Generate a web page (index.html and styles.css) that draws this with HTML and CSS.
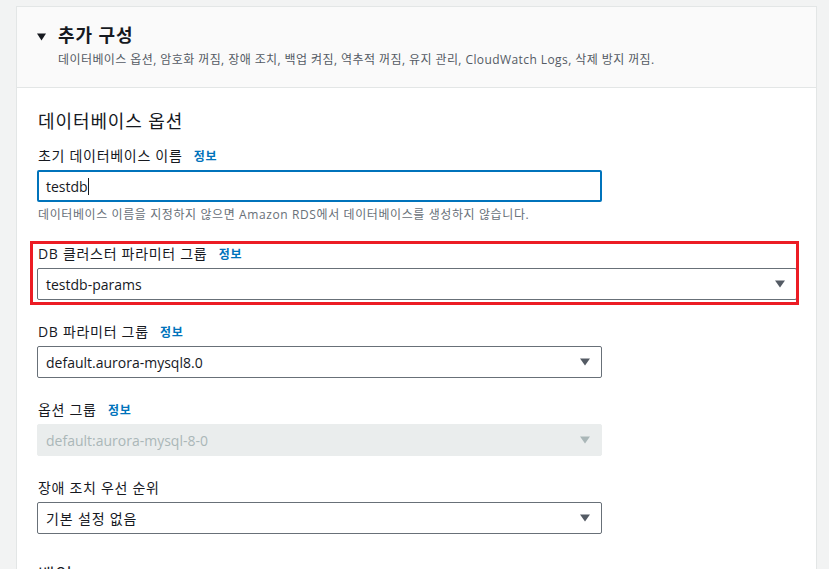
FILE: index.html
```html
<!DOCTYPE html>
<html lang="ko">
<head>
<meta charset="utf-8">
<title>추가 구성</title>
<link rel="stylesheet" href="styles.css">
</head>
<body>
<div class="page">
  <section class="panel">
    <header class="panel-header">
      <svg class="caret" width="9" height="8" viewBox="0 0 9 8"><polygon points="0,0.5 9,0.5 4.5,7.5" fill="#16191f"/></svg>
      <div class="header-text">
        <h2 class="title">추가 구성</h2>
        <p class="subtitle">데이터베이스 옵션, 암호화 꺼짐, 장애 조치, 백업 켜짐, 역추적 꺼짐, 유지 관리, CloudWatch Logs, 삭제 방지 꺼짐.</p>
      </div>
    </header>
    <div class="panel-body">
      <h3 class="section-heading">데이터베이스 옵션</h3>

      <div class="field">
        <div class="label">초기 데이터베이스 이름 <a class="info">정보</a></div>
        <div class="control control-focus">testdb<span class="cursor"></span></div>
        <div class="hint">데이터베이스 이름을 지정하지 않으면 Amazon RDS에서 데이터베이스를 생성하지 않습니다.</div>
      </div>

      <div class="field field-highlight">
        <div class="label">DB 클러스터 파라미터 그룹 <a class="info">정보</a></div>
        <div class="control select control-wide">testdb-params
          <svg class="arrow" width="10" height="8" viewBox="0 0 10 8"><polygon points="0,0.5 10,0.5 5,7.5" fill="#545b64"/></svg>
        </div>
      </div>

      <div class="field">
        <div class="label">DB 파라미터 그룹 <a class="info">정보</a></div>
        <div class="control select">default.aurora-mysql8.0
          <svg class="arrow" width="10" height="8" viewBox="0 0 10 8"><polygon points="0,0.5 10,0.5 5,7.5" fill="#545b64"/></svg>
        </div>
      </div>

      <div class="field">
        <div class="label">옵션 그룹 <a class="info">정보</a></div>
        <div class="control select control-disabled">default:aurora-mysql-8-0
          <svg class="arrow" width="10" height="8" viewBox="0 0 10 8"><polygon points="0,0.5 10,0.5 5,7.5" fill="#aab7b8"/></svg>
        </div>
      </div>

      <div class="field">
        <div class="label">장애 조치 우선 순위</div>
        <div class="control select control-ko">기본 설정 없음
          <svg class="arrow" width="10" height="8" viewBox="0 0 10 8"><polygon points="0,0.5 10,0.5 5,7.5" fill="#545b64"/></svg>
        </div>
      </div>

      <h3 class="section-heading section-next">백업</h3>
    </div>
  </section>
</div>
</body>
</html>
```

FILE: styles.css
```css
html, body {
  margin: 0;
  padding: 0;
  overflow: hidden;
  background: #f2f3f3;
}

body {
  font-family: "Open Sans", "Noto Sans CJK KR", sans-serif;
  color: #16191f;
  font-size: 14px;
}

.page {
  padding: 6px 12px 0 16px;
}

.panel {
  width: 801px;
  box-sizing: border-box;
  border: 1px solid #e3e6e6;
  background: #ffffff;
}

.panel-header {
  display: flex;
  align-items: flex-start;
  background: #fafafa;
  border-bottom: 1px solid #e3e6e6;
  padding: 14px 20px 20px 20px;
}

.caret {
  margin-top: 12px;
  margin-right: 12px;
  flex: none;
}

.title {
  margin: 0;
  height: 26px;
  font-size: 18px;
  line-height: 28px;
  font-weight: 700;
  letter-spacing: 0.05em;
}

.subtitle {
  margin: 4px 0 0 0;
  height: 16px;
  font-size: 12px;
  line-height: 18px;
  color: #545b64;
  letter-spacing: 0.035em;
}

.panel-body {
  padding: 19px 20px 40px 20px;
}

.section-heading {
  margin: 0 0 11px 1px;
  height: 26px;
  font-size: 18px;
  line-height: 28px;
  font-weight: 400;
  letter-spacing: 0.05em;
}

.section-next {
  margin-top: 27px;
}

.field {
  margin-bottom: 20px;
}

.label {
  height: 20px;
  line-height: 24px;
  margin: 0 0 6px 1px;
  letter-spacing: 0.05em;
}

.info {
  color: #0073bb;
  font-size: 12px;
  font-weight: 700;
  margin-left: 7px;
}

.control {
  position: relative;
  width: 565px;
  height: 32px;
  box-sizing: border-box;
  border: 1px solid #687078;
  border-radius: 2px;
  padding: 1px 30px 0 8px;
  line-height: 30px;
  color: #16191f;
}

.control-ko {
  letter-spacing: 0.06em;
}

.control-focus {
  border: 2px solid #0073bb;
  padding-left: 7px;
  line-height: 28px;
}

.cursor {
  display: inline-block;
  width: 1px;
  height: 17px;
  background: #16191f;
  vertical-align: -3px;
}

.control-wide {
  width: 760px;
}

.control-disabled {
  background: #eaeded;
  border-color: #eaeded;
  color: #aab7b8;
}

.arrow {
  position: absolute;
  right: 11px;
  top: 11px;
}

.hint {
  margin: 4px 0 0 1px;
  height: 16px;
  font-size: 12px;
  line-height: 18px;
  color: #687078;
  letter-spacing: 0.05em;
}

.field-highlight {
  position: relative;
}

.field-highlight::after {
  content: "";
  position: absolute;
  left: -7px;
  right: -3px;
  top: -1px;
  bottom: -5px;
  border: 3px solid #ec1c24;
  pointer-events: none;
}
```
